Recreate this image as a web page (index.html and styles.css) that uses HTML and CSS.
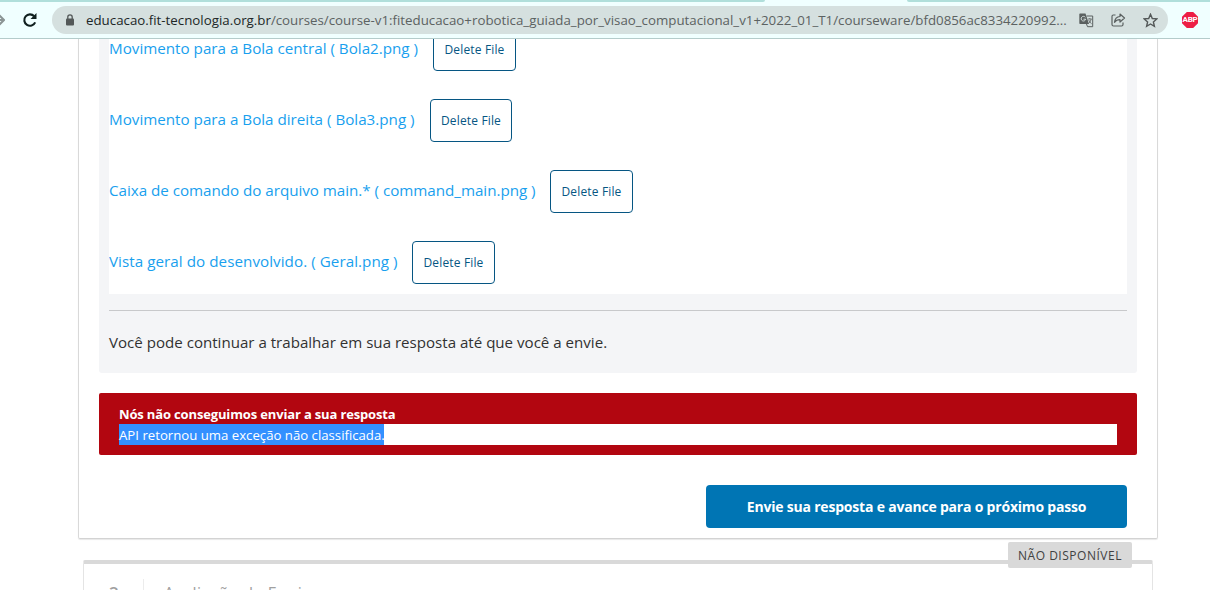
FILE: index.html
```html
<!DOCTYPE html>
<html lang="pt-BR">
<head>
<meta charset="utf-8">
<title>Robótica guiada por visão computacional</title>
<link rel="stylesheet" href="styles.css">
</head>
<body>
<div class="window">
  <header class="browser">
    <div class="tabs"><span class="tab-bg tab-left"></span><span class="tab-bg tab-right"></span></div>
    <div class="toolbar">
      <svg class="forward" width="5" height="12" viewBox="0 0 5 12"><path d="M0 6H3.5M-1 1L4 6L-1 11" fill="none" stroke="#8b9595" stroke-width="2"/></svg>
      <svg class="reload" width="16" height="16" viewBox="0 0 16 16"><path d="M13.2 10.4A5.7 5.7 0 1 1 12.2 4.2" fill="none" stroke="#10201f" stroke-width="2.1"/><path d="M14.5 1V7H8.5Z" fill="#10201f"/></svg>
      <div class="address">
        <svg class="lock" width="10" height="12" viewBox="0 0 10 12"><rect x="1" y="4.5" width="8" height="7" rx="1" fill="#535858"/><path d="M2.8 5V3a2.2 2.2 0 0 1 4.4 0V5" fill="none" stroke="#535858" stroke-width="1.3"/></svg>
        <span class="url"><span class="host">educacao.fit-tecnologia.org.br</span>/courses/course-v1:fiteducacao+robotica_guiada_por_visao_computacional_v1+2022_01_T1/courseware/bfd0856ac8334220992...</span>
        <svg class="translate" width="15" height="15" viewBox="0 0 15 15"><path d="M7.5 3H13.7V13.7H8.5L7.5 11" fill="none" stroke="#5a6060"/><path d="M1 0.5H6.5L10 11H1Q.3 11 .3 10V1.5Q.3 .5 1 .5Z" fill="#5a6060"/><path d="M6.3 4.3A2.3 2.3 0 1 0 6.7 6.2H4.5" fill="none" stroke="#d5e0df"/><path d="M8.8 6H12.8M10.8 5V6M12.2 6Q11.7 9 9.5 10.5M9.7 7Q10.7 9.5 12.6 10.7" fill="none" stroke="#5a6060" stroke-width=".8"/></svg>
        <svg class="share" width="15" height="14" viewBox="0 0 15 14"><path d="M4.5 2H2.3Q1 2 1 3.5V11.5Q1 13 2.5 13H10.5Q12 13 12 11.5V9.5" fill="none" stroke="#5a6060" stroke-width="1.2"/><path d="M9 1L13.5 5L9 9V6.7Q5.3 6.7 3.5 9.3Q4 4 9 3.5Z" fill="none" stroke="#5a6060" stroke-width="1.2" stroke-linejoin="round"/></svg>
        <svg class="star" width="15" height="15" viewBox="0 0 15 15"><path d="M7.5 1.3L9.3 5.5L13.8 5.9L10.4 8.9L11.4 13.3L7.5 11L3.6 13.3L4.6 8.9L1.2 5.9L5.7 5.5Z" fill="none" stroke="#535858" stroke-width="1.4"/></svg>
      </div>
      <div class="abp">ABP</div>
    </div>
  </header>
  <main class="page">
    <section class="step">
      <div class="response">
        <div class="files">
          <div class="file"><a class="link f1">Movimento para a Bola central ( Bola2.png )</a><button class="delete">Delete File</button></div>
          <div class="file"><a class="link f2">Movimento para a Bola direita ( Bola3.png )</a><button class="delete narrow">Delete File</button></div>
          <div class="file"><a class="link f3">Caixa de comando do arquivo main.* ( command_main.png )</a><button class="delete">Delete File</button></div>
          <div class="file"><a class="link f4">Vista geral do desenvolvido. ( Geral.png )</a><button class="delete">Delete File</button></div>
        </div>
        <p class="hint">Você pode continuar a trabalhar em sua resposta até que você a envie.</p>
      </div>
      <div class="error">
        <h3 class="error-title">Nós não conseguimos enviar a sua resposta</h3>
        <p class="error-body"><span class="selected">API retornou uma exceção não classificada.</span></p>
      </div>
      <div class="actions"><button class="submit">Envie sua resposta e avance para o próximo passo</button></div>
    </section>
    <section class="next-step">
      <span class="badge">NÃO DISPONÍVEL</span>
      <div class="next-head"><span class="number">2</span><span class="next-title">Avaliação da Equipe</span></div>
    </section>
  </main>
</div>
</body>
</html>
```
FILE: styles.css
```css
* { box-sizing: border-box; }
body { margin: 0; background: #fff; font-family: "Open Sans", "Noto Sans", sans-serif; }
button { font-family: inherit; padding: 0; }
svg { display: block; flex: none; overflow: hidden; }
.window { width: 1210px; height: 590px; overflow: hidden; display: flex; flex-direction: column; }
.browser { flex: none; height: 39px; background: #f0ffff; border-bottom: 1px solid #b4cccb; }
.tabs { display: flex; justify-content: space-between; height: 2px; }
.tab-bg { background: #b0dfdb; height: 2px; }
.tab-left { width: 765px; border-bottom-right-radius: 2px; }
.tab-right { width: 303px; border-bottom-left-radius: 2px; }
.toolbar { display: flex; align-items: center; height: 36px; }
.reload { margin-left: 17px; }
.address { margin-left: 14px; width: 1116px; height: 28px; border-radius: 14px; background: #d5e0df; display: flex; align-items: center; }
.lock { margin-left: 13px; }
.url { margin-left: 11px; width: 984px; font-size: 13.3px; line-height: 20px; color: #5c6262; white-space: nowrap; }
.host { color: #202727; }
.translate { margin-left: 9px; }
.share { margin-left: 17px; }
.star { margin-left: 17px; }
.abp { margin-left: 14px; width: 16px; height: 16px; background: #ed1e45; color: #fff; font: 700 8px/16px "Roboto", sans-serif; text-align: center; letter-spacing: -.2px; clip-path: polygon(30% 0, 70% 0, 100% 30%, 100% 70%, 70% 100%, 30% 100%, 0 70%, 0 30%); }
.page { flex: 1; min-height: 0; padding: 0 52px 0 78px; overflow: hidden; }
.step { height: 500px; padding: 0 20px; border: 1px solid #d9d9d9; border-top: 0; border-bottom-color: #d3d3d3; border-radius: 0 0 2px 2px; box-shadow: 0 1px 1px #e8e8e8; display: flex; flex-direction: column; }
.response { flex: none; height: 334px; padding: 0 10px; background: #f4f5f7; border-radius: 0 0 3px 3px; }
.files { height: 255px; background: #fff; overflow: hidden; display: flex; flex-direction: column; justify-content: flex-end; gap: 28px; padding-bottom: 10px; }
.file { flex: none; height: 43px; display: flex; align-items: center; gap: 14px; }
.link { padding-bottom: 3px; font-size: 15.2px; line-height: 24px; color: #199fee; white-space: nowrap; }
.f1 { width: 310px; }
.f2 { width: 307px; }
.f3 { width: 427px; letter-spacing: -.03px; }
.f4 { width: 289px; letter-spacing: .05px; }
.delete { flex: none; width: 83px; height: 43px; border: 1px solid #065683; border-radius: 4px; background: #fff; color: #065683; font-size: 12px; font-weight: 500; letter-spacing: .15px; }
.narrow { width: 82px; }
.hint { margin: 16px 0 0; border-top: 1px solid #c8c9cb; padding-top: 19px; font-size: 15.1px; line-height: 24px; color: #313131; white-space: nowrap; }
.error { flex: none; margin-top: 20px; height: 62px; padding: 10px 20px; border-radius: 2px; background: #b20610; color: #fff; font-size: 13.2px; line-height: 21px; white-space: nowrap; }
.error-title { margin: 0; height: 21px; font-size: 13px; line-height: 23px; font-weight: 700; letter-spacing: -.15px; }
.error-body { margin: 0; background: #fff; display: flex; }
.selected { background: #3390ff; width: 265px; height: 21px; line-height: 23px; }
.actions { display: flex; justify-content: flex-end; padding: 30px 10px 0; }
.submit { width: 421px; height: 43px; border: 0; border-radius: 4px; background: #0075b4; color: #fff; font-size: 14px; font-weight: 700; letter-spacing: -.2px; white-space: nowrap; }
.next-step { position: relative; margin: 21px 5px 0; height: 80px; border: 1px solid #e4e4e4; border-top: 4px solid #d9d9d9; border-radius: 2px 2px 0 0; }
.badge { position: absolute; right: 20px; top: -22px; width: 124px; height: 26px; border-radius: 2px; background: #d9d9d9; color: #414141; font-size: 12px; line-height: 27px; text-align: center; letter-spacing: .52px; }
.next-head { display: flex; padding: 15px 0 0 25px; color: #a0a0a0; white-space: nowrap; }
.number { width: 35px; border-right: 1px solid #ececec; font-size: 17px; line-height: 27px; font-weight: 600; }
.next-title { margin-left: 20px; font-size: 16px; line-height: 28px; letter-spacing: .5px; }
```
